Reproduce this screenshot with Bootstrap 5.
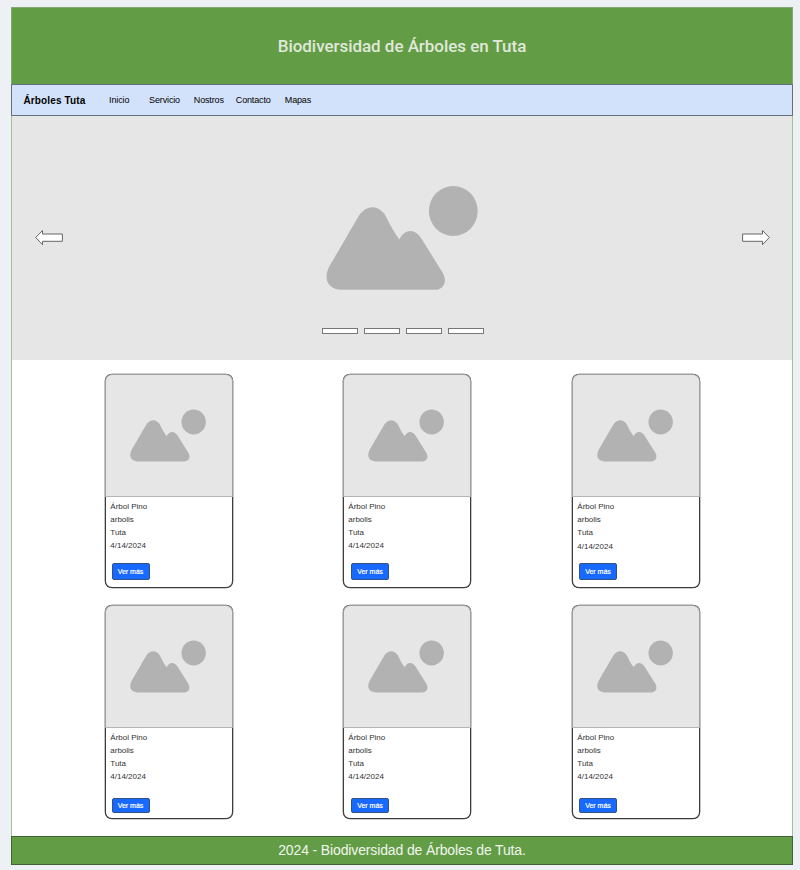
<!DOCTYPE html>
<html lang="es">
<head>
<meta charset="utf-8">
<meta name="viewport" content="width=device-width, initial-scale=1">
<title>Biodiversidad de Árboles en Tuta</title>
<link href="https://cdn.jsdelivr.net/npm/bootstrap@5.3.0/dist/css/bootstrap.min.css" rel="stylesheet">
<style>
body{background:#edf1f6;font-family:"Liberation Sans",Arial,sans-serif;color:#333}
.page{width:782px;height:858px;margin:7px 0 0 11px;background:#fff}
.site-head{height:77px;background:#629d45;border:1px solid #85a675;border-bottom:0;color:#e0e8db;font:500 17px/1 Roboto,sans-serif;letter-spacing:-.04px}
.site-nav{height:32px;background:#d3e2fb;border:1px solid #66707c;padding:0 0 0 11.5px}
.site-nav .navbar-brand{font-size:10px;font-weight:700;line-height:12px;color:#000;width:85.6px;margin:0;padding:2px 0 0;letter-spacing:.13px}
.site-nav .nav-link{font-size:9px;line-height:12px;color:#000;padding:0;white-space:nowrap;letter-spacing:-.14px}
.w-a{width:40px}.w-b{width:44.7px}.w-c{width:42px}.w-d{width:49px}
.body-frame{border:solid #a3c193;border-width:0 1px}
.hero{height:244px;background:#e6e6e6;padding:0 22px 0 23px}
.marks{position:absolute;left:310px;top:212px;gap:6px}
.marks span{width:36px;height:6px;background:#fff;border:1px solid #777}
.trees{height:476px;padding:14px 0 0 93px}
.tree-row{height:231px}
.tree{width:128px;height:214px;border:1px solid #3c3c3c;border-radius:7px;box-shadow:0 0 0 .3px #3c3c3c;margin-right:110px;background:#fff}
.tree+.tree{margin-right:101px}
.tree+.tree+.tree{margin-right:0}
.tree-pic{width:128px;height:123px;margin:-1px 0 0 -1px;background:#e6e6e6;border:1px solid #a0a0a0;border-bottom-color:#b5b5b5;border-radius:7px 7px 0 0}
.tree-pic svg{margin:0 1px 0 0}
.tree-text{font-size:8px;line-height:13px;padding:3px 0 0 4.3px;height:66px;color:#333}
.date-low{margin-top:1px}
.tree .btn{width:38px;height:17px;margin-left:5.5px;padding:0;background:#1769ff;border:1px solid #34527f;border-radius:2px;color:#fff;font-size:7px;line-height:15px;-webkit-text-stroke:.2px #fff}
.tree+.tree .btn{margin-left:7px}
.tree+.tree+.tree .btn{margin-left:6px}
.row-low .tree .btn{height:15px;line-height:13px;margin-top:4px}
.site-foot{height:29px;background:#629d45;border:1px solid #426333;color:#f1f5ee;font-size:14px;line-height:26px;letter-spacing:-.135px}
</style>
<script src="https://cdn.jsdelivr.net/npm/bootstrap@5.3.0/dist/js/bootstrap.bundle.min.js"></script>
</head>
<body>
<svg width="0" height="0" class="position-absolute" aria-hidden="true">
  <symbol id="landscape" viewBox="0 0 153 106">
    <g fill="#b2b2b2"><path d="M3 82 L33 30.5 C41 19.5 52 19.5 59.5 30.5 C64 40 68 47 73.3 54.5 C79 43.5 89 43.5 95 53 L116.7 87.7 C122 97 117 104.8 109 104.8 H15.7 C2 104.8 -3 94 3 82Z"/><ellipse cx="127.3" cy="26" rx="24.4" ry="25"/></g>
  </symbol>
</svg>
<div class="page d-flex flex-column">
  <header class="site-head d-flex align-items-center justify-content-center">Biodiversidad de Árboles en Tuta</header>
  <nav class="site-nav d-flex align-items-center">
    <a class="navbar-brand" href="#">Árboles Tuta</a>
    <a class="nav-link w-a" href="#">Inicio</a>
    <a class="nav-link w-b" href="#">Servicio</a>
    <a class="nav-link w-c" href="#">Nostros</a>
    <a class="nav-link w-d" href="#">Contacto</a>
    <a class="nav-link" href="#">Mapas</a>
  </nav>
  <main class="body-frame">
    <section class="hero position-relative d-flex align-items-center justify-content-between">
      <svg width="28" height="16" viewBox="0 0 28 16"><path d="M.7 7.5 7.5.5V4H27.4V11.3H7.5V14.7Z" fill="#fff" stroke="#666"/></svg>
      <svg width="153" height="106"><use href="#landscape"/></svg>
      <svg width="28" height="16" viewBox="0 0 28 16"><path d="M27.3 7.5 20.5.5V4H.6V11.3H20.5V14.7Z" fill="#fff" stroke="#666"/></svg>
      <div class="marks d-flex"><span></span><span></span><span></span><span></span></div>
    </section>
    <section class="trees">
      <div class="tree-row d-flex align-items-start">
        <article class="tree"><div class="tree-pic d-flex align-items-center justify-content-center"><svg width="76.5" height="53"><use href="#landscape"/></svg></div><div class="tree-text"><div>Árbol Pino</div><div>arbolis</div><div>Tuta</div><div>4/14/2024</div></div><button class="btn d-block">Ver más</button></article>
        <article class="tree"><div class="tree-pic d-flex align-items-center justify-content-center"><svg width="76.5" height="53"><use href="#landscape"/></svg></div><div class="tree-text"><div>Árbol Pino</div><div>arbolis</div><div>Tuta</div><div>4/14/2024</div></div><button class="btn d-block">Ver más</button></article>
        <article class="tree"><div class="tree-pic d-flex align-items-center justify-content-center"><svg width="76.5" height="53"><use href="#landscape"/></svg></div><div class="tree-text"><div>Árbol Pino</div><div>arbolis</div><div>Tuta</div><div class="date-low">4/14/2024</div></div><button class="btn d-block">Ver más</button></article>
      </div>
      <div class="tree-row row-low d-flex align-items-start">
        <article class="tree"><div class="tree-pic d-flex align-items-center justify-content-center"><svg width="76.5" height="53"><use href="#landscape"/></svg></div><div class="tree-text"><div>Árbol Pino</div><div>arbolis</div><div>Tuta</div><div>4/14/2024</div></div><button class="btn d-block">Ver más</button></article>
        <article class="tree"><div class="tree-pic d-flex align-items-center justify-content-center"><svg width="76.5" height="53"><use href="#landscape"/></svg></div><div class="tree-text"><div>Árbol Pino</div><div>arbolis</div><div>Tuta</div><div>4/14/2024</div></div><button class="btn d-block">Ver más</button></article>
        <article class="tree"><div class="tree-pic d-flex align-items-center justify-content-center"><svg width="76.5" height="53"><use href="#landscape"/></svg></div><div class="tree-text"><div>Árbol Pino</div><div>arbolis</div><div>Tuta</div><div>4/14/2024</div></div><button class="btn d-block">Ver más</button></article>
      </div>
    </section>
  </main>
  <footer class="site-foot text-center">2024 - Biodiversidad de Árboles de Tuta.</footer>
</div>
</body>
</html>
